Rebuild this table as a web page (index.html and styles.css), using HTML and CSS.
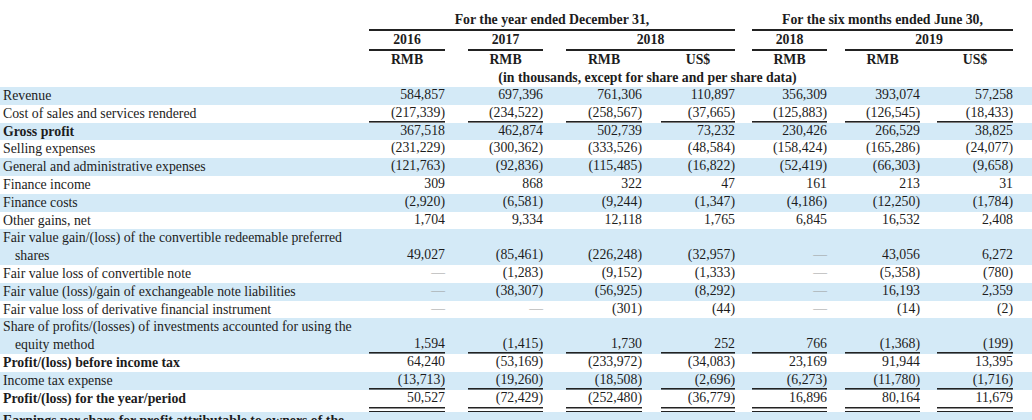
FILE: index.html
```html
<!DOCTYPE html>
<html lang="en">
<head>
<meta charset="utf-8">
<title>Consolidated statements of profit or loss</title>
<link rel="stylesheet" href="styles.css">
</head>
<body>
<div class="fin">
  <div class="row hrow">
    <div class="lab"></div>
    <div class="h grp-year">For the year ended December 31,</div>
    <div class="h grp-half">For the six months ended June 30,</div>
  </div>
  <div class="row hrow">
    <div class="lab"></div>
    <div class="h col1">2016</div>
    <div class="h col2">2017</div>
    <div class="h col34">2018</div>
    <div class="h col5">2018</div>
    <div class="h col67">2019</div>
  </div>
  <div class="row cur">
    <div class="lab"></div>
    <div class="c">RMB</div>
    <div class="c">RMB</div>
    <div class="c">RMB</div>
    <div class="c">US$</div>
    <div class="c">RMB</div>
    <div class="c">RMB</div>
    <div class="c">US$</div>
  </div>
  <div class="row unit">
    <div class="lab"></div>
    <div class="note">(in thousands, except for share and per share data)</div>
  </div>

  <div class="row data blue">
    <div class="lab">Revenue</div>
    <div class="c">584,857</div><div class="c">697,396</div><div class="c">761,306</div><div class="c">110,897</div><div class="c">356,309</div><div class="c">393,074</div><div class="c">57,258</div>
  </div>
  <div class="row data ul">
    <div class="lab">Cost of sales and services rendered</div>
    <div class="c">(217,339)</div><div class="c">(234,522)</div><div class="c">(258,567)</div><div class="c">(37,665)</div><div class="c">(125,883)</div><div class="c">(126,545)</div><div class="c">(18,433)</div>
  </div>
  <div class="row data blue b">
    <div class="lab">Gross profit</div>
    <div class="c">367,518</div><div class="c">462,874</div><div class="c">502,739</div><div class="c">73,232</div><div class="c">230,426</div><div class="c">266,529</div><div class="c">38,825</div>
  </div>
  <div class="row data">
    <div class="lab">Selling expenses</div>
    <div class="c">(231,229)</div><div class="c">(300,362)</div><div class="c">(333,526)</div><div class="c">(48,584)</div><div class="c">(158,424)</div><div class="c">(165,286)</div><div class="c">(24,077)</div>
  </div>
  <div class="row data blue">
    <div class="lab">General and administrative expenses</div>
    <div class="c">(121,763)</div><div class="c">(92,836)</div><div class="c">(115,485)</div><div class="c">(16,822)</div><div class="c">(52,419)</div><div class="c">(66,303)</div><div class="c">(9,658)</div>
  </div>
  <div class="row data">
    <div class="lab">Finance income</div>
    <div class="c">309</div><div class="c">868</div><div class="c">322</div><div class="c">47</div><div class="c">161</div><div class="c">213</div><div class="c">31</div>
  </div>
  <div class="row data blue">
    <div class="lab">Finance costs</div>
    <div class="c">(2,920)</div><div class="c">(6,581)</div><div class="c">(9,244)</div><div class="c">(1,347)</div><div class="c">(4,186)</div><div class="c">(12,250)</div><div class="c">(1,784)</div>
  </div>
  <div class="row data">
    <div class="lab">Other gains, net</div>
    <div class="c">1,704</div><div class="c">9,334</div><div class="c">12,118</div><div class="c">1,765</div><div class="c">6,845</div><div class="c">16,532</div><div class="c">2,408</div>
  </div>
  <div class="row data blue">
    <div class="lab">Fair value gain/(loss) of the convertible redeemable preferred<br><span class="ind">shares</span></div>
    <div class="c">49,027</div><div class="c">(85,461)</div><div class="c">(226,248)</div><div class="c">(32,957)</div><div class="c d">—</div><div class="c">43,056</div><div class="c">6,272</div>
  </div>
  <div class="row data">
    <div class="lab">Fair value loss of convertible note</div>
    <div class="c d">—</div><div class="c">(1,283)</div><div class="c">(9,152)</div><div class="c">(1,333)</div><div class="c d">—</div><div class="c">(5,358)</div><div class="c">(780)</div>
  </div>
  <div class="row data blue">
    <div class="lab">Fair value (loss)/gain of exchangeable note liabilities</div>
    <div class="c d">—</div><div class="c">(38,307)</div><div class="c">(56,925)</div><div class="c">(8,292)</div><div class="c d">—</div><div class="c">16,193</div><div class="c">2,359</div>
  </div>
  <div class="row data">
    <div class="lab">Fair value loss of derivative financial instrument</div>
    <div class="c d">—</div><div class="c d">—</div><div class="c">(301)</div><div class="c">(44)</div><div class="c d">—</div><div class="c">(14)</div><div class="c">(2)</div>
  </div>
  <div class="row data blue ul">
    <div class="lab">Share of profits/(losses) of investments accounted for using the<br><span class="ind">equity method</span></div>
    <div class="c">1,594</div><div class="c">(1,415)</div><div class="c">1,730</div><div class="c">252</div><div class="c">766</div><div class="c">(1,368)</div><div class="c">(199)</div>
  </div>
  <div class="row data b">
    <div class="lab">Profit/(loss) before income tax</div>
    <div class="c">64,240</div><div class="c">(53,169)</div><div class="c">(233,972)</div><div class="c">(34,083)</div><div class="c">23,169</div><div class="c">91,944</div><div class="c">13,395</div>
  </div>
  <div class="row data blue ul">
    <div class="lab">Income tax expense</div>
    <div class="c">(13,713)</div><div class="c">(19,260)</div><div class="c">(18,508)</div><div class="c">(2,696)</div><div class="c">(6,273)</div><div class="c">(11,780)</div><div class="c">(1,716)</div>
  </div>
  <div class="row data b dbl">
    <div class="lab">Profit/(loss) for the year/period</div>
    <div class="c">50,527</div><div class="c">(72,429)</div><div class="c">(252,480)</div><div class="c">(36,779)</div><div class="c">16,896</div><div class="c">80,164</div><div class="c">11,679</div>
  </div>
  <div class="row data blue b">
    <div class="lab">Earnings per share for profit attributable to owners of the</div>
  </div>
</div>
</body>
</html>
```

FILE: styles.css
```css
html, body {
  margin: 0;
  padding: 0;
  background: #ffffff;
  overflow: hidden;
}

body {
  font-family: "Liberation Serif", "Times New Roman", serif;
  font-size: 13.8px;
  color: #1c1c1c;
}

.fin {
  padding-top: 11px;
  width: 1032px;
}

.row {
  display: grid;
  grid-template-columns: 346px 99px 98px 99px 93px 92px 93px 93px;
  line-height: 17.8px;
}

.blue {
  background: #d4eaf7;
}

.lab {
  padding-left: 3px;
  white-space: nowrap;
}

.ind {
  padding-left: 12px;
}

.b .lab {
  font-weight: bold;
}

/* header rows */
.hrow {
  line-height: 18px;
  font-weight: bold;
}

.h {
  text-align: center;
  border-bottom: 2px solid #222;
}

.grp-year { grid-column: 2 / 6; margin-left: 23px; }
.grp-half { grid-column: 6 / 9; margin-left: 17px; }
.col1 { grid-column: 2; margin-left: 23px; }
.col2 { grid-column: 3; margin-left: 23px; }
.col34 { grid-column: 4 / 6; margin-left: 23px; }
.col5 { grid-column: 6; margin-left: 17px; }
.col67 { grid-column: 7 / 9; margin-left: 18px; }

.cur {
  line-height: 18px;
  font-weight: bold;
}

.cur .c {
  text-align: center;
}

.unit {
  line-height: 18px;
  font-weight: bold;
}

.note {
  grid-column: 3 / 7;
  margin-left: 23px;
  text-align: center;
  white-space: nowrap;
}

/* value cells */
.c {
  text-align: right;
  align-self: end;
  white-space: nowrap;
}

.data > .c {
  line-height: 16.8px;
  padding-bottom: 1px;
}

.row > .c:nth-child(2) { margin-left: 23px; }
.row > .c:nth-child(3) { margin-left: 23px; }
.row > .c:nth-child(4) { margin-left: 23px; }
.row > .c:nth-child(5) { margin-left: 19px; }
.row > .c:nth-child(6) { margin-left: 17px; }
.row > .c:nth-child(7) { margin-left: 18px; }
.row > .c:nth-child(8) { margin-left: 17px; }

.c.d {
  color: #9a9a9a;
}

.ul > .c {
  background: linear-gradient(#222, #222) left bottom / 100% 1.6px no-repeat;
}

.data.dbl > .c {
  padding-bottom: 6px;
  background:
    linear-gradient(#222, #222) left bottom / 100% 1.5px no-repeat,
    linear-gradient(#222, #222) left 0 bottom 3.5px / 100% 1.5px no-repeat;
}
```
